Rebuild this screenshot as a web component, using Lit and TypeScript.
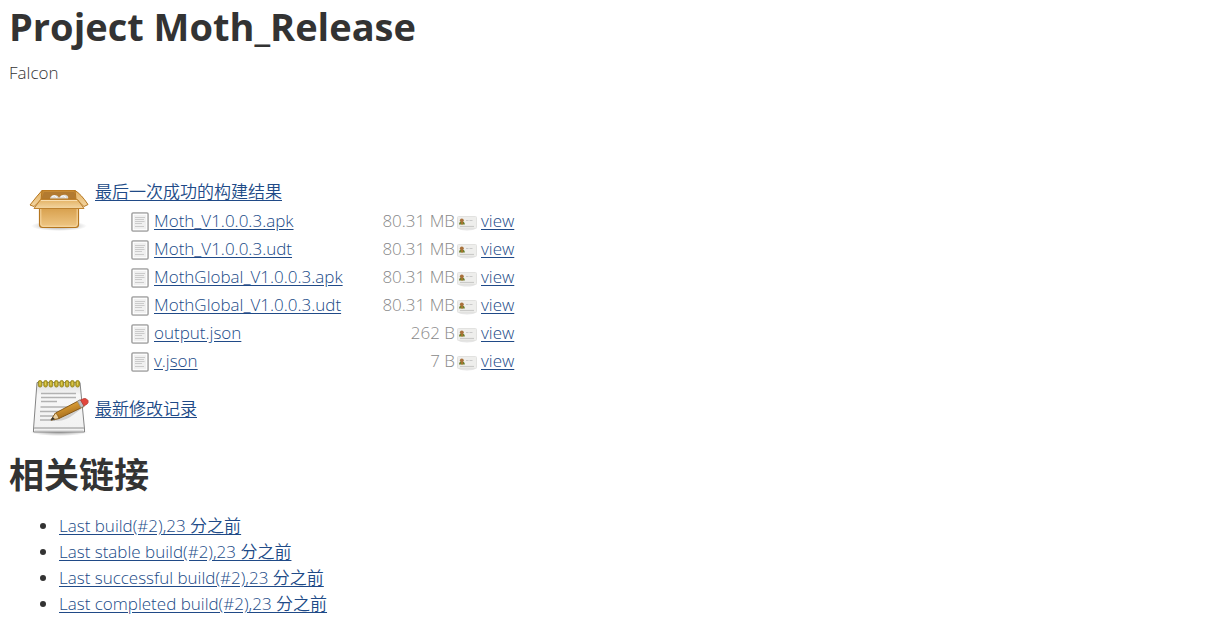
import { LitElement, html, css, svg } from "lit";
import { customElement } from "lit/decorators.js";

interface Artifact {
  name: string;
  size: string;
}

const artifacts: Artifact[] = [
  { name: "Moth_V1.0.0.3.apk", size: "80.31 MB" },
  { name: "Moth_V1.0.0.3.udt", size: "80.31 MB" },
  { name: "MothGlobal_V1.0.0.3.apk", size: "80.31 MB" },
  { name: "MothGlobal_V1.0.0.3.udt", size: "80.31 MB" },
  { name: "output.json", size: "262 B" },
  { name: "v.json", size: "7 B" },
];

const permalinks = [
  "Last build(#2),23 分之前",
  "Last stable build(#2),23 分之前",
  "Last successful build(#2),23 分之前",
  "Last completed build(#2),23 分之前",
];

const packageIcon = html`<svg class="big" viewBox="0 0 64 64" aria-hidden="true">
  <defs>
    <linearGradient id="front" x1="0" y1="0" x2="0" y2="1">
      <stop offset="0" stop-color="#eec583" /><stop offset=".35" stop-color="#d9a250" /><stop offset="1" stop-color="#efc785" />
    </linearGradient>
    <linearGradient id="flap" x1="0" y1="0" x2="0" y2="1">
      <stop offset="0" stop-color="#e3b162" /><stop offset="1" stop-color="#f3d6a3" />
    </linearGradient>
    <radialGradient id="shade"><stop offset="0" stop-color="#000" stop-opacity=".4" /><stop offset="1" stop-color="#000" stop-opacity="0" /></radialGradient>
  </defs>
  <ellipse cx="32" cy="47" rx="28" ry="5" fill="url(#shade)" />
  <path d="M15 11.500H48L54 21H10Z" fill="#c58a35" stroke="#bd7b22" />
  <path d="M17 13H47L50 20H14Z" fill="#b27a30" />
  <path d="M23 20c0-5 8-5 9-1 2-5 11-4 9 1Z" fill="#dddbd5" />
  <path d="M25 17.500q3-2 5 1M34 17.500q3-2 5 1" fill="none" stroke="#fff" />
  <path d="M12.500 20H51.500V45.500q0 3-3 3H15.500q-3 0-3-3Z" fill="url(#front)" stroke="#b5761f" stroke-width="1.200" />
  <path d="M13.800 30V45q0 2.200 2.200 2.200h32q2.200 0 2.200-2.200V30" fill="none" stroke="#f7d9a5" />
  <path d="M15 11.500Q10 17 3 26L7 27.500 14 21Z" fill="url(#flap)" stroke="#b5761f" />
  <path d="M48 11.500Q54 15 61 25.500L57 27.500 49 20Z" fill="url(#flap)" stroke="#b5761f" />
  <path d="M13.500 20.500H50.500L57 29.500H7Z" fill="url(#flap)" stroke="#bd812f" />
  <path d="M14 21.500H50" stroke="#f9deb0" />
</svg>`;

const notepadIcon = html`<svg class="big" viewBox="0 0 64 64" aria-hidden="true">
  <defs>
    <linearGradient id="paper" x1="0" y1="0" x2="0" y2="1">
      <stop offset="0" stop-color="#dcdcdc" /><stop offset=".25" stop-color="#f7f7f7" /><stop offset="1" stop-color="#f1f1f1" />
    </linearGradient>
    <linearGradient id="pencil" x1="0" y1="0" x2="0.500" y2="1">
      <stop offset="0" stop-color="#e9c06b" /><stop offset=".5" stop-color="#cf922f" /><stop offset="1" stop-color="#98621a" />
    </linearGradient>
    <radialGradient id="below"><stop offset="0" stop-color="#000" stop-opacity=".4" /><stop offset="1" stop-color="#000" stop-opacity="0" /></radialGradient>
  </defs>
  <ellipse cx="32" cy="57" rx="29" ry="4" fill="url(#below)" />
  <path d="M10 7.500H53L57.500 54v3H6.500v-3Z" fill="url(#paper)" stroke="#858585" stroke-linejoin="round" />
  <path d="M7 53H57" stroke="#c0c0c0" stroke-width="2" /><path d="M8 55.500H56" stroke="#dedede" />
  <path d="M14 18.500H49M14 22.500H49M14 26.500H30M13.500 32H44M13 36.500H37M13 41H31M13 45H28" stroke="#b2b2b2" stroke-width="1.300" />
  <path d="M24 45q12 3 22-5l8-6-3-2Z" fill="#999" opacity=".4" />
  ${[12.500, 18, 23.300, 28.800, 34.100, 39.500, 44.800, 50].map(
    (x) => svg`<rect x=${x - 1.200} y="5.500" width="3.600" height="6.500" rx="1.700" fill="#c2ac2b" stroke="#92821d" stroke-width=".9" /><path d="M${x + 0.500} 7v3" stroke="#e3d566" stroke-width=".8" />`
  )}
  <path d="M24 45l4.500-7L53 25l4 6.500L32 43.500Z" fill="url(#pencil)" stroke="#80510f" stroke-width=".9" stroke-linejoin="round" />
  <path d="M24 45l4.500-7 2 2 1.500 3.500Z" fill="#ecd1a0" stroke="#80510f" stroke-width=".7" />
  <path d="M23.500 45.500l2.300-3.500 2 2Z" fill="#333" />
  <path d="M50.500 26.300l3-1.600 3.500 6.300-3 1.700Z" fill="#bfc1c4" stroke="#83858a" stroke-width=".6" />
  <path d="M53.500 25l3.500-1.500q2.500-.5 3.800 1.800 1.200 2.200-.5 3.600L57 31Z" fill="#e2463c" stroke="#b03a30" stroke-width=".7" />
</svg>`;

const fileIcon = html`<svg class="file" viewBox="0 0 18 20" aria-hidden="true">
  <rect x="1" y="1" width="16" height="18" rx="1" fill="#f0f0f0" stroke="#a0a0a0" stroke-width="1.600" />
  <rect x="2.300" y="2.300" width="13.400" height="15.400" fill="none" stroke="#fff" />
  <path d="M4 5.500H14M4 7.500H13M4 9.500H13.500M4 11.500H11M4 14.500H13" stroke="#cbcbcb" />
</svg>`;

const fingerprintIcon = html`<svg class="print" viewBox="0 0 20 16" aria-hidden="true">
  <ellipse cx="10" cy="13.800" rx="8" ry="1.700" fill="#000" opacity=".1" />
  <rect x=".5" y="1.500" width="19" height="12" rx="1" fill="#eeeeec" stroke="#e2e2e0" />
  <path d="M2 9.500q0-2.800 2.800-3.500 3 .7 3 3.500Z" fill="#6b7f2c" />
  <circle cx="4.800" cy="5.300" r="1.900" fill="#a9713b" /><path d="M4.300 7h1.500v2.500H4.300Z" fill="#b5702e" />
  <path d="M9 5.500H11.500M12.500 5.500H15.500" stroke="#cacaca" /><path d="M3 11.500H17" stroke="#cacac8" stroke-width="1.200" />
</svg>`;

@customElement("app-root")
export class AppRoot extends LitElement {
  static styles = css`
    :host {
      display: block;
      padding: 0 9px;
      color: #333;
      background: #fff;
      font: 340 17px/26px "Open Sans", "Noto Sans CJK SC", sans-serif;
    }
    h1, h2, p, ul { margin: 0; }
    h1 { font-size: 38px; line-height: 52px; font-weight: 700; }
    h2 { font-size: 35px; line-height: 48px; font-weight: 700; margin-top: 12px; }
    a { color: #204a87; text-decoration: underline; text-underline-offset: 2px; }
    .description { padding: 8px 0 93px; }
    .summary { display: grid; grid-template-columns: 64px 1fr; column-gap: 4px; padding-left: 18px; }
    .big { display: block; width: 64px; height: 64px; }
    .changes { align-self: center; padding-top: 4px; }
    .files { border-collapse: collapse; margin: 2px 0 0 36px; }
    .files td { box-sizing: border-box; padding: 0; height: 28px; white-space: nowrap; }
    .files .icon { width: 23px; padding-top: 2px; }
    .files .name { min-width: 228px; }
    .files .size { min-width: 73px; text-align: right; color: #888; }
    .files .mark { padding: 4px 4px 0 2px; }
    .file { display: block; width: 18px; height: 20px; }
    .print { display: block; width: 20px; height: 16px; }
    .links { padding: 14px 0 0 50px; }
  `;

  render() {
    return html`
      <main>
        <h1>Project Moth_Release</h1>
        <p class="description">Falcon</p>
        <div class="summary">
          ${packageIcon}
          <div>
            <a href="#artifacts">最后一次成功的构建结果</a>
            <table class="files">
              <tbody>
                ${artifacts.map(
                  (a) => html`<tr>
                    <td class="icon">${fileIcon}</td>
                    <td class="name"><a href="#${a.name}">${a.name}</a></td>
                    <td class="size">${a.size}</td>
                    <td class="mark">${fingerprintIcon}</td>
                    <td><a href="#view-${a.name}">view</a></td>
                  </tr>`
                )}
              </tbody>
            </table>
          </div>
          ${notepadIcon}
          <div class="changes"><a href="#changes">最新修改记录</a></div>
        </div>
        <h2>相关链接</h2>
        <ul class="links">
          ${permalinks.map((label) => html`<li><a href="#builds">${label}</a></li>`)}
        </ul>
      </main>
    `;
  }
}
